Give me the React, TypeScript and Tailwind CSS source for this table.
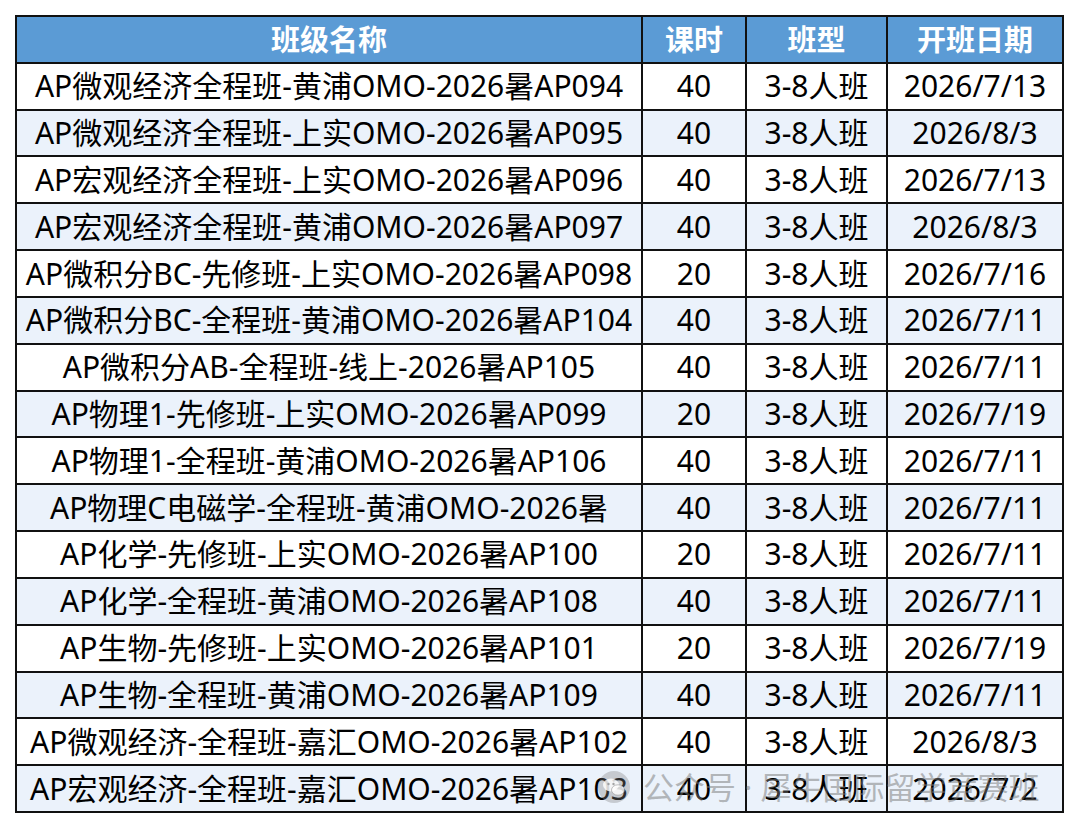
import React from "react";

const rows: [string, string, string][] = [
  ["AP微观经济全程班-黄浦OMO-2026暑AP094", "40", "2026/7/13"],
  ["AP微观经济全程班-上实OMO-2026暑AP095", "40", "2026/8/3"],
  ["AP宏观经济全程班-上实OMO-2026暑AP096", "40", "2026/7/13"],
  ["AP宏观经济全程班-黄浦OMO-2026暑AP097", "40", "2026/8/3"],
  ["AP微积分BC-先修班-上实OMO-2026暑AP098", "20", "2026/7/16"],
  ["AP微积分BC-全程班-黄浦OMO-2026暑AP104", "40", "2026/7/11"],
  ["AP微积分AB-全程班-线上-2026暑AP105", "40", "2026/7/11"],
  ["AP物理1-先修班-上实OMO-2026暑AP099", "20", "2026/7/19"],
  ["AP物理1-全程班-黄浦OMO-2026暑AP106", "40", "2026/7/11"],
  ["AP物理C电磁学-全程班-黄浦OMO-2026暑", "40", "2026/7/11"],
  ["AP化学-先修班-上实OMO-2026暑AP100", "20", "2026/7/11"],
  ["AP化学-全程班-黄浦OMO-2026暑AP108", "40", "2026/7/11"],
  ["AP生物-先修班-上实OMO-2026暑AP101", "20", "2026/7/19"],
  ["AP生物-全程班-黄浦OMO-2026暑AP109", "40", "2026/7/11"],
  ["AP微观经济-全程班-嘉汇OMO-2026暑AP102", "40", "2026/8/3"],
  ["AP宏观经济-全程班-嘉汇OMO-2026暑AP103", "40", "2026/7/2"],
];

const font = { fontFamily: "'Noto Sans', 'Noto Sans CJK SC', sans-serif" };

export default function App() {
  return (
    <div className="relative w-[1080px] h-[828px] bg-white" style={font}>
      <div className="absolute left-[15px] top-[15px]">
        <div className="grid grid-cols-[624px_102px_139px_174px] grid-rows-[repeat(17,1fr)] gap-[2px] p-[2px] bg-[#111] w-[1049px] h-[798px]">
          {["班级名称", "课时", "班型", "开班日期"].map((h) => (
            <div
              key={h}
              className="bg-[#5b9bd5] text-white font-bold text-[29px] flex items-center justify-center leading-none"
            >
              {h}
            </div>
          ))}
          {rows.map((r, i) => {
            const bg = i % 2 === 1 ? "bg-[#ebf2fb]" : "bg-white";
            return (
              <React.Fragment key={i}>
                <div className={`${bg} text-[30px] text-black flex items-center justify-center leading-none whitespace-nowrap`}>{r[0]}</div>
                <div className={`${bg} text-[30px] text-black flex items-center justify-center leading-none`}>{r[1]}</div>
                <div className={`${bg} text-[30px] text-black flex items-center justify-center leading-none`}>3-8人班</div>
                <div className={`${bg} text-[30px] text-black flex items-center justify-center leading-none`}>{r[2]}</div>
              </React.Fragment>
            );
          })}
        </div>
      </div>
      <div className="absolute left-[597px] top-[770px] flex items-center gap-[12px] text-[31px] leading-none text-[rgba(120,120,120,0.5)] pointer-events-none">
        <svg width="34" height="34" viewBox="0 0 34 34">
          <circle cx="17" cy="17" r="16" fill="rgba(130,130,130,0.35)" />
          <ellipse cx="14" cy="15" rx="8" ry="6.5" fill="rgba(255,255,255,0.8)" />
          <ellipse cx="21" cy="20" rx="6.5" ry="5.2" fill="rgba(255,255,255,0.8)" stroke="rgba(130,130,130,0.5)" strokeWidth="1" />
          <circle cx="11.5" cy="14" r="1.2" fill="rgba(130,130,130,0.7)" />
          <circle cx="16.5" cy="14" r="1.2" fill="rgba(130,130,130,0.7)" />
        </svg>
        <span>公众号 · 犀牛国际留学竞赛班</span>
      </div>
    </div>
  );
}
